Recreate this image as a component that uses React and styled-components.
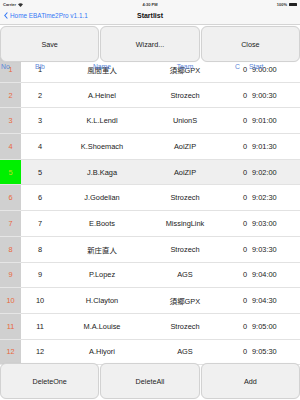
import React from 'react';
import styled, { createGlobalStyle } from 'styled-components';

const GlobalStyle = createGlobalStyle`
  html, body { margin: 0; padding: 0; background: #fff; }
  body { font-family: "Liberation Sans", "Noto Sans CJK JP", sans-serif; }
`;

const Page = styled.div`
  width: 300px;
  height: 400px;
  display: flex;
  flex-direction: column;
  overflow: hidden;
  background: #fff;
`;

const TopBar = styled.div`
  height: 25px;
  flex: none;
  background: #f7f7f7;
  border-bottom: 1px solid #d4d4d4;
  box-sizing: border-box;
  display: flex;
  flex-direction: column;
`;

const StatusBar = styled.div`
  height: 9px;
  display: grid;
  grid-template-columns: 1fr auto 1fr;
  align-items: center;
  padding: 0 3px;
  font-size: 4px;
  font-weight: bold;
  color: #333;
`;

const StatusLeft = styled.div`
  display: flex;
  align-items: center;
  gap: 2px;
`;

const StatusRight = styled.div`
  display: flex;
  justify-content: flex-end;
  align-items: center;
  gap: 2px;
`;

const Battery = styled.span`
  width: 8px;
  height: 3px;
  background: #222;
  border-radius: 0.5px;
`;

const NavBar = styled.div`
  flex: 1;
  display: grid;
  grid-template-columns: 1fr auto 1fr;
  align-items: center;
  padding: 0 4px 2px;
`;

const BackLink = styled.div`
  display: flex;
  align-items: center;
  gap: 2px;
  color: #3478f6;
  font-size: 6.4px;
  white-space: nowrap;
`;

const NavTitle = styled.div`
  font-size: 7px;
  font-weight: bold;
  color: #111;
`;

const ButtonRow = styled.div`
  height: 38px;
  flex: none;
  display: grid;
  grid-template-columns: repeat(3, 1fr);
  gap: 1px;
  padding: 1px 0;
  box-sizing: border-box;
  position: relative;
  z-index: 2;
`;

const Button = styled.div`
  background: #f0f0f0;
  border: 1px solid #d2d2d2;
  border-radius: 6px;
  display: flex;
  align-items: center;
  justify-content: center;
  font-size: 7.2px;
  color: #222;
  box-shadow: 0 0 1px rgba(0, 0, 0, 0.08);
`;

const TableArea = styled.div`
  flex: 1;
  position: relative;
  min-height: 0;
`;

const Rows = styled.div`
  margin-top: -6px;
`;

const columns = '21px 38px 86px 80px 22px 1fr';

const Row = styled.div`
  height: 25.7px;
  display: grid;
  grid-template-columns: ${columns};
  align-items: center;
  background: ${p => (p.$selected ? '#efefef' : '#fff')};
  font-size: 7.4px;
  color: #1a1a1a;
`;

const NoCell = styled.div`
  height: 100%;
  display: flex;
  align-items: center;
  justify-content: center;
  background: ${p => (p.$selected ? '#00f000' : '#d0d0d0')};
  color: ${p => (p.$selected ? '#c8d820' : '#e8683c')};
  border-bottom: 1px solid #e6e6e6;
  box-sizing: border-box;
`;

const Cell = styled.div`
  height: 100%;
  display: flex;
  align-items: center;
  justify-content: ${p => p.$align || 'center'};
  padding-left: ${p => p.$pl || 0}px;
  border-bottom: 1px solid #e2e2e2;
  box-sizing: border-box;
  white-space: nowrap;
`;

const HeaderOverlay = styled.div`
  position: absolute;
  top: -1px;
  left: 0;
  right: 0;
  height: 9px;
  display: grid;
  grid-template-columns: ${columns};
  align-items: center;
  font-size: 6.8px;
  color: #5a86d8;
  z-index: 3;
  pointer-events: none;
`;

const HeaderLabel = styled.div`
  display: flex;
  justify-content: ${p => p.$align || 'center'};
  padding-left: ${p => p.$pl || 0}px;
`;

const data = [
  ['1', '風間軍人', '須郷GPX', '9:00:00'],
  ['2', 'A.Heinel', 'Strozech', '9:00:30'],
  ['3', 'K.L.Lendl', 'UnionS', '9:01:00'],
  ['4', 'K.Shoemach', 'AoiZIP', '9:01:30'],
  ['5', 'J.B.Kaga', 'AoiZIP', '9:02:00'],
  ['6', 'J.Godelian', 'Strozech', '9:02:30'],
  ['7', 'E.Boots', 'MissingLink', '9:03:00'],
  ['8', '新庄直人', 'Strozech', '9:03:30'],
  ['9', 'P.Lopez', 'AGS', '9:04:00'],
  ['10', 'H.Clayton', '須郷GPX', '9:04:30'],
  ['11', 'M.A.Louise', 'Strozech', '9:05:00'],
  ['12', 'A.Hiyori', 'AGS', '9:05:30'],
];

function Chevron() {
  return (
    <svg width="4" height="7" viewBox="0 0 4 7">
      <path d="M3.4 0.5 L0.8 3.5 L3.4 6.5" fill="none" stroke="#3478f6" strokeWidth="1.1" />
    </svg>
  );
}

function Wifi() {
  return (
    <svg width="5" height="4" viewBox="0 0 10 8">
      <path d="M5 8 L0 2.5 Q5 -1.5 10 2.5 Z" fill="#333" />
    </svg>
  );
}

export default function App() {
  return (
    <Page>
      <GlobalStyle />
      <TopBar>
        <StatusBar>
          <StatusLeft>
            Carrier <Wifi />
          </StatusLeft>
          <div>4:30 PM</div>
          <StatusRight>
            100% <Battery />
          </StatusRight>
        </StatusBar>
        <NavBar>
          <BackLink>
            <Chevron />
            Home EBATime2Pro v1.1.1
          </BackLink>
          <NavTitle>Startlist</NavTitle>
          <div />
        </NavBar>
      </TopBar>
      <ButtonRow>
        <Button>Save</Button>
        <Button>Wizard...</Button>
        <Button>Close</Button>
      </ButtonRow>
      <TableArea>
        <HeaderOverlay>
          <HeaderLabel $align="flex-start" $pl={1}>No</HeaderLabel>
          <HeaderLabel>Bib</HeaderLabel>
          <HeaderLabel>Name</HeaderLabel>
          <HeaderLabel>Team</HeaderLabel>
          <HeaderLabel $align="flex-start" $pl={10}>C</HeaderLabel>
          <HeaderLabel $align="flex-start" $pl={2}>Start</HeaderLabel>
        </HeaderOverlay>
        <Rows>
          {data.map(([no, name, team, start]) => {
            const selected = no === '5';
            return (
              <Row key={no} $selected={selected}>
                <NoCell $selected={selected}>{no}</NoCell>
                <Cell>{no}</Cell>
                <Cell>{name}</Cell>
                <Cell>{team}</Cell>
                <Cell $align="flex-end">0</Cell>
                <Cell $align="flex-start" $pl={5}>{start}</Cell>
              </Row>
            );
          })}
        </Rows>
      </TableArea>
      <ButtonRow>
        <Button>DeleteOne</Button>
        <Button>DeleteAll</Button>
        <Button>Add</Button>
      </ButtonRow>
    </Page>
  );
}
